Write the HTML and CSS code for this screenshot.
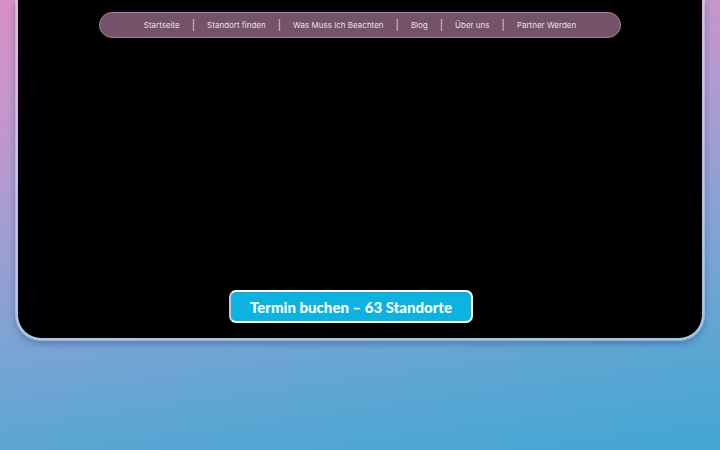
FILE: index.html
```html
<!DOCTYPE html>
<html lang="de">
<head>
    <meta charset="UTF-8">
    <meta name="viewport" content="width=device-width, initial-scale=1.0">
    <title>Termin buchen</title>
    <link rel="stylesheet" href="styles.css">
</head>
<body>
<div class="screen">
    <nav class="nav">
        <a href="#">Startseite</a>
        <span class="sep">|</span>
        <a href="#">Standort finden</a>
        <span class="sep">|</span>
        <a href="#">Was Muss Ich Beachten</a>
        <span class="sep">|</span>
        <a href="#">Blog</a>
        <span class="sep">|</span>
        <a href="#">Über uns</a>
        <span class="sep">|</span>
        <a href="#">Partner Werden</a>
    </nav>
    <div class="stage"></div>
    <a class="book-button" href="#">Termin buchen – 63 Standorte</a>
</div>
</body>
</html>
```

FILE: styles.css
```css
html, body {
    height: 100%;
}

body {
    margin: 0;
    background: linear-gradient(172deg, #d98fc5 0%, #b79ad0 30%, #7ea3d4 62%, #5ea6d3 80%, #42a6d4 100%);
    font-family: Inter, 'Noto Sans', sans-serif;
    overflow: hidden;
}

.screen {
    box-sizing: border-box;
    height: 341px;
    margin: 0 15px;
    background-color: #000;
    background-clip: padding-box;
    border: 3px solid rgba(255, 255, 255, 0.38);
    border-top: none;
    border-radius: 0 0 26px 26px;
    box-shadow: 0 3px 6px rgba(30, 60, 120, 0.35);
    display: flex;
    flex-direction: column;
    padding: 12px 0 15px;
}

.nav {
    align-self: center;
    box-sizing: border-box;
    width: 522px;
    height: 26px;
    display: flex;
    align-items: center;
    justify-content: center;
    gap: 12px;
    background-color: #74536a;
    border: 1px solid #a3839a;
    border-radius: 13px;
    font-size: 8px;
}

.nav a {
    color: #ecdfe8;
    text-decoration: none;
}

.sep {
    color: #e6d3e0;
    font-size: 10px;
}

.stage {
    flex: 1;
}

.book-button {
    align-self: center;
    margin-right: 18px;
    box-sizing: border-box;
    width: 244px;
    height: 33px;
    display: flex;
    align-items: center;
    justify-content: center;
    background-color: #0bb4e0;
    border: 2px solid #fff;
    border-left-color: #e0b8e0;
    border-radius: 7px;
    color: #fff;
    font-family: Lato, sans-serif;
    font-weight: 900;
    font-size: 15px;
    text-decoration: none;
}
```
